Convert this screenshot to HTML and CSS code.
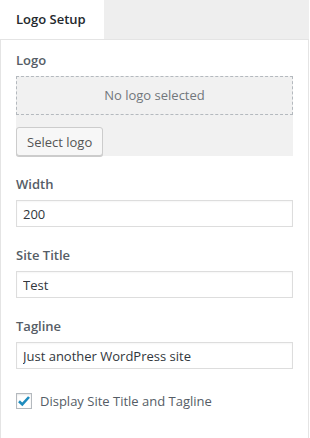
FILE: index.html
```html
<!DOCTYPE html>
<html lang="en">
<head>
  <meta charset="UTF-8">
  <meta name="viewport" content="width=device-width, initial-scale=1.0">
  <title>Logo Setup</title>
  <link rel="stylesheet" href="styles.css">
</head>
<body>
  <div class="wrap">
    <div class="tabs">
      <div class="tab">Logo Setup</div>
    </div>

    <div class="panel">
      <div class="control">
        <div class="control-title">Logo</div>
        <div class="logo-box">
          <div class="placeholder">No logo selected</div>
          <button class="button">Select logo</button>
        </div>
      </div>

      <div class="control">
        <label class="control-title" for="width">Width</label>
        <input id="width" class="text-input" type="text" value="200">
      </div>

      <div class="control">
        <label class="control-title" for="site-title">Site Title</label>
        <input id="site-title" class="text-input" type="text" value="Test">
      </div>

      <div class="control">
        <label class="control-title" for="tagline">Tagline</label>
        <input id="tagline" class="text-input" type="text" value="Just another WordPress site">
      </div>

      <label class="check-row">
        <span class="checkbox">
          <svg width="14" height="14" viewBox="0 0 14 14">
            <path d="M2 7.2 L5.3 10.4 L12 3" fill="none" stroke="#1e8cbe" stroke-width="2.6"/>
          </svg>
        </span>
        Display Site Title and Tagline
      </label>
    </div>
  </div>
</body>
</html>
```

FILE: styles.css
```css
body {
  margin: 0;
  padding: 0;
  background-color: #fff;
  font-family: 'Open Sans', 'Noto Sans', sans-serif;
  font-size: 13px;
  color: #555d66;
}
.wrap {
  width: 309px;
}
.tabs {
  display: flex;
  height: 39px;
  background-color: #eee;
}
.tab {
  width: 88px;
  padding-left: 16px;
  background-color: #fff;
  line-height: 39px;
  font-weight: 600;
  color: #23282d;
}
.panel {
  height: 396px;
  border: 1px solid #e4e4e4;
  padding: 8px 15px 0;
}
.control {
  display: flex;
  flex-direction: column;
  margin-bottom: 16px;
}
.control-title {
  display: block;
  line-height: 24px;
  margin-bottom: 4px;
  font-weight: 600;
  font-size: 13px;
  color: #555d66;
}
.logo-box {
  display: flex;
  flex-direction: column;
  align-items: flex-start;
  gap: 12px;
  background-color: #f1f1f1;
}
.placeholder {
  box-sizing: border-box;
  width: 100%;
  height: 39px;
  border: 1px dashed #b4b9be;
  line-height: 37px;
  text-align: center;
  color: #72777c;
}
.button {
  height: 29px;
  padding: 0 10px;
  background-color: #f7f7f7;
  border: 1px solid #ccc;
  border-radius: 3px;
  box-shadow: 0 1px 0 #ccc;
  font-family: inherit;
  font-size: 13px;
  color: #555;
}
.text-input {
  box-sizing: border-box;
  width: 100%;
  height: 27px;
  margin: 0;
  padding: 0 6px;
  border: 1px solid #ddd;
  box-shadow: inset 0 1px 2px rgba(0,0,0,0.04);
  font-family: inherit;
  font-size: 13px;
  color: #32373c;
}
.check-row {
  display: flex;
  align-items: center;
  gap: 8px;
  padding-top: 7px;
  color: #555d66;
}
.checkbox {
  box-sizing: border-box;
  display: flex;
  align-items: center;
  justify-content: center;
  width: 16px;
  height: 16px;
  border: 1px solid #b4b9be;
  background-color: #fff;
  box-shadow: inset 0 1px 2px rgba(0,0,0,0.1);
}
```
